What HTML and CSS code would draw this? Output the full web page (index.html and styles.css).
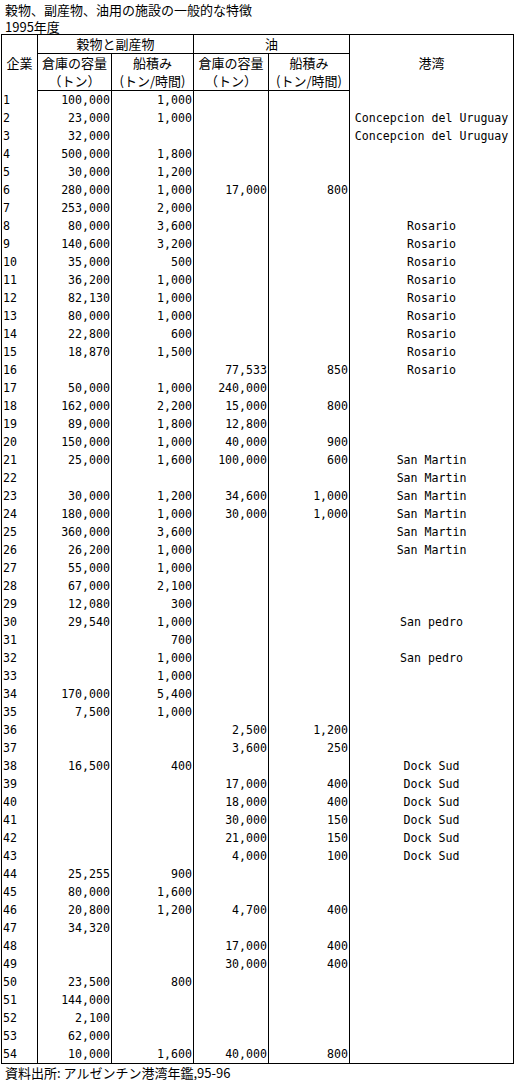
FILE: index.html
```html
<!DOCTYPE html>
<html lang="ja">

<head>
    <meta charset="UTF-8">
    <title>穀物、副産物、油用の施設の一般的な特徴</title>
    <link rel="stylesheet" href="styles.css">
</head>

<body>
    <div class="sheet">
        <p class="title">穀物、副産物、油用の施設の一般的な特徴</p>
        <p class="year">1995年度</p>
        <table class="facilities">
            <colgroup>
                <col class="c-no">
                <col class="c-grain-store">
                <col class="c-grain-load">
                <col class="c-oil-store">
                <col class="c-oil-load">
                <col class="c-port">
            </colgroup>
            <thead>
                <tr>
                    <th rowspan="3">企業</th>
                    <th colspan="2" class="group">穀物と副産物</th>
                    <th colspan="2" class="group">油</th>
                    <th rowspan="3">港湾</th>
                </tr>
                <tr>
                    <th>倉庫の容量</th>
                    <th>船積み</th>
                    <th>倉庫の容量</th>
                    <th>船積み</th>
                </tr>
                <tr class="units">
                    <th>（トン）</th>
                    <th>(トン/時間)</th>
                    <th>（トン）</th>
                    <th>(トン/時間)</th>
                </tr>
            </thead>
            <tbody>
                <tr><td class="no">1</td><td class="num">100,000</td><td class="num">1,000</td><td class="num"></td><td class="num"></td><td class="port"></td></tr>
                <tr><td class="no">2</td><td class="num">23,000</td><td class="num">1,000</td><td class="num"></td><td class="num"></td><td class="port">Concepcion del Uruguay</td></tr>
                <tr><td class="no">3</td><td class="num">32,000</td><td class="num"></td><td class="num"></td><td class="num"></td><td class="port">Concepcion del Uruguay</td></tr>
                <tr><td class="no">4</td><td class="num">500,000</td><td class="num">1,800</td><td class="num"></td><td class="num"></td><td class="port"></td></tr>
                <tr><td class="no">5</td><td class="num">30,000</td><td class="num">1,200</td><td class="num"></td><td class="num"></td><td class="port"></td></tr>
                <tr><td class="no">6</td><td class="num">280,000</td><td class="num">1,000</td><td class="num">17,000</td><td class="num">800</td><td class="port"></td></tr>
                <tr><td class="no">7</td><td class="num">253,000</td><td class="num">2,000</td><td class="num"></td><td class="num"></td><td class="port"></td></tr>
                <tr><td class="no">8</td><td class="num">80,000</td><td class="num">3,600</td><td class="num"></td><td class="num"></td><td class="port">Rosario</td></tr>
                <tr><td class="no">9</td><td class="num">140,600</td><td class="num">3,200</td><td class="num"></td><td class="num"></td><td class="port">Rosario</td></tr>
                <tr><td class="no">10</td><td class="num">35,000</td><td class="num">500</td><td class="num"></td><td class="num"></td><td class="port">Rosario</td></tr>
                <tr><td class="no">11</td><td class="num">36,200</td><td class="num">1,000</td><td class="num"></td><td class="num"></td><td class="port">Rosario</td></tr>
                <tr><td class="no">12</td><td class="num">82,130</td><td class="num">1,000</td><td class="num"></td><td class="num"></td><td class="port">Rosario</td></tr>
                <tr><td class="no">13</td><td class="num">80,000</td><td class="num">1,000</td><td class="num"></td><td class="num"></td><td class="port">Rosario</td></tr>
                <tr><td class="no">14</td><td class="num">22,800</td><td class="num">600</td><td class="num"></td><td class="num"></td><td class="port">Rosario</td></tr>
                <tr><td class="no">15</td><td class="num">18,870</td><td class="num">1,500</td><td class="num"></td><td class="num"></td><td class="port">Rosario</td></tr>
                <tr><td class="no">16</td><td class="num"></td><td class="num"></td><td class="num">77,533</td><td class="num">850</td><td class="port">Rosario</td></tr>
                <tr><td class="no">17</td><td class="num">50,000</td><td class="num">1,000</td><td class="num">240,000</td><td class="num"></td><td class="port"></td></tr>
                <tr><td class="no">18</td><td class="num">162,000</td><td class="num">2,200</td><td class="num">15,000</td><td class="num">800</td><td class="port"></td></tr>
                <tr><td class="no">19</td><td class="num">89,000</td><td class="num">1,800</td><td class="num">12,800</td><td class="num"></td><td class="port"></td></tr>
                <tr><td class="no">20</td><td class="num">150,000</td><td class="num">1,000</td><td class="num">40,000</td><td class="num">900</td><td class="port"></td></tr>
                <tr><td class="no">21</td><td class="num">25,000</td><td class="num">1,600</td><td class="num">100,000</td><td class="num">600</td><td class="port">San Martin</td></tr>
                <tr><td class="no">22</td><td class="num"></td><td class="num"></td><td class="num"></td><td class="num"></td><td class="port">San Martin</td></tr>
                <tr><td class="no">23</td><td class="num">30,000</td><td class="num">1,200</td><td class="num">34,600</td><td class="num">1,000</td><td class="port">San Martin</td></tr>
                <tr><td class="no">24</td><td class="num">180,000</td><td class="num">1,000</td><td class="num">30,000</td><td class="num">1,000</td><td class="port">San Martin</td></tr>
                <tr><td class="no">25</td><td class="num">360,000</td><td class="num">3,600</td><td class="num"></td><td class="num"></td><td class="port">San Martin</td></tr>
                <tr><td class="no">26</td><td class="num">26,200</td><td class="num">1,000</td><td class="num"></td><td class="num"></td><td class="port">San Martin</td></tr>
                <tr><td class="no">27</td><td class="num">55,000</td><td class="num">1,000</td><td class="num"></td><td class="num"></td><td class="port"></td></tr>
                <tr><td class="no">28</td><td class="num">67,000</td><td class="num">2,100</td><td class="num"></td><td class="num"></td><td class="port"></td></tr>
                <tr><td class="no">29</td><td class="num">12,080</td><td class="num">300</td><td class="num"></td><td class="num"></td><td class="port"></td></tr>
                <tr><td class="no">30</td><td class="num">29,540</td><td class="num">1,000</td><td class="num"></td><td class="num"></td><td class="port">San pedro</td></tr>
                <tr><td class="no">31</td><td class="num"></td><td class="num">700</td><td class="num"></td><td class="num"></td><td class="port"></td></tr>
                <tr><td class="no">32</td><td class="num"></td><td class="num">1,000</td><td class="num"></td><td class="num"></td><td class="port">San pedro</td></tr>
                <tr><td class="no">33</td><td class="num"></td><td class="num">1,000</td><td class="num"></td><td class="num"></td><td class="port"></td></tr>
                <tr><td class="no">34</td><td class="num">170,000</td><td class="num">5,400</td><td class="num"></td><td class="num"></td><td class="port"></td></tr>
                <tr><td class="no">35</td><td class="num">7,500</td><td class="num">1,000</td><td class="num"></td><td class="num"></td><td class="port"></td></tr>
                <tr><td class="no">36</td><td class="num"></td><td class="num"></td><td class="num">2,500</td><td class="num">1,200</td><td class="port"></td></tr>
                <tr><td class="no">37</td><td class="num"></td><td class="num"></td><td class="num">3,600</td><td class="num">250</td><td class="port"></td></tr>
                <tr><td class="no">38</td><td class="num">16,500</td><td class="num">400</td><td class="num"></td><td class="num"></td><td class="port">Dock Sud</td></tr>
                <tr><td class="no">39</td><td class="num"></td><td class="num"></td><td class="num">17,000</td><td class="num">400</td><td class="port">Dock Sud</td></tr>
                <tr><td class="no">40</td><td class="num"></td><td class="num"></td><td class="num">18,000</td><td class="num">400</td><td class="port">Dock Sud</td></tr>
                <tr><td class="no">41</td><td class="num"></td><td class="num"></td><td class="num">30,000</td><td class="num">150</td><td class="port">Dock Sud</td></tr>
                <tr><td class="no">42</td><td class="num"></td><td class="num"></td><td class="num">21,000</td><td class="num">150</td><td class="port">Dock Sud</td></tr>
                <tr><td class="no">43</td><td class="num"></td><td class="num"></td><td class="num">4,000</td><td class="num">100</td><td class="port">Dock Sud</td></tr>
                <tr><td class="no">44</td><td class="num">25,255</td><td class="num">900</td><td class="num"></td><td class="num"></td><td class="port"></td></tr>
                <tr><td class="no">45</td><td class="num">80,000</td><td class="num">1,600</td><td class="num"></td><td class="num"></td><td class="port"></td></tr>
                <tr><td class="no">46</td><td class="num">20,800</td><td class="num">1,200</td><td class="num">4,700</td><td class="num">400</td><td class="port"></td></tr>
                <tr><td class="no">47</td><td class="num">34,320</td><td class="num"></td><td class="num"></td><td class="num"></td><td class="port"></td></tr>
                <tr><td class="no">48</td><td class="num"></td><td class="num"></td><td class="num">17,000</td><td class="num">400</td><td class="port"></td></tr>
                <tr><td class="no">49</td><td class="num"></td><td class="num"></td><td class="num">30,000</td><td class="num">400</td><td class="port"></td></tr>
                <tr><td class="no">50</td><td class="num">23,500</td><td class="num">800</td><td class="num"></td><td class="num"></td><td class="port"></td></tr>
                <tr><td class="no">51</td><td class="num">144,000</td><td class="num"></td><td class="num"></td><td class="num"></td><td class="port"></td></tr>
                <tr><td class="no">52</td><td class="num">2,100</td><td class="num"></td><td class="num"></td><td class="num"></td><td class="port"></td></tr>
                <tr><td class="no">53</td><td class="num">62,000</td><td class="num"></td><td class="num"></td><td class="num"></td><td class="port"></td></tr>
                <tr><td class="no">54</td><td class="num">10,000</td><td class="num">1,600</td><td class="num">40,000</td><td class="num">800</td><td class="port"></td></tr>
            </tbody>
        </table>
        <p class="source">資料出所: アルゼンチン港湾年鑑,95-96</p>
    </div>
</body>

</html>
```

FILE: styles.css
```css
html,
body {
    margin: 0;
    padding: 0;
    background-color: #fff;
    color: #000;
    font-family: "Noto Sans CJK JP", sans-serif;
    font-size: 13px;
}

.sheet {
    padding: 0 1px;
}

.title,
.year,
.source {
    margin: 0;
    padding-left: 4px;
    height: 17px;
    line-height: 19px;
}

.source {
    line-height: 17px;
}

/* TABLE */
.facilities {
    width: 512px;
    table-layout: fixed;
    border-collapse: collapse;
    border: 1px solid #000;
}

.facilities th,
.facilities td {
    height: 18px;
    padding: 0;
    border-left: 1px solid #000;
    border-right: 1px solid #000;
    white-space: nowrap;
    overflow: hidden;
}

.facilities th {
    font-weight: normal;
    font-size: 13px;
    line-height: 18px;
    text-align: center;
}

.facilities th.group {
    border-bottom: 1px solid #000;
}

.facilities tr.units th {
    border-bottom: 1px solid #000;
}

.facilities td {
    font-family: "DejaVu Sans Mono", monospace;
    font-size: 11.6px;
    line-height: 18px;
}

td.no {
    text-align: left;
    padding-left: 1px;
}

td.num {
    text-align: right;
    padding-right: 1px;
}

td.port {
    text-align: center;
}

col.c-no {
    width: 36px;
}

col.c-grain-store {
    width: 74px;
}

col.c-grain-load {
    width: 82px;
}

col.c-oil-store {
    width: 75px;
}

col.c-oil-load {
    width: 81px;
}

col.c-port {
    width: 164px;
}
```
